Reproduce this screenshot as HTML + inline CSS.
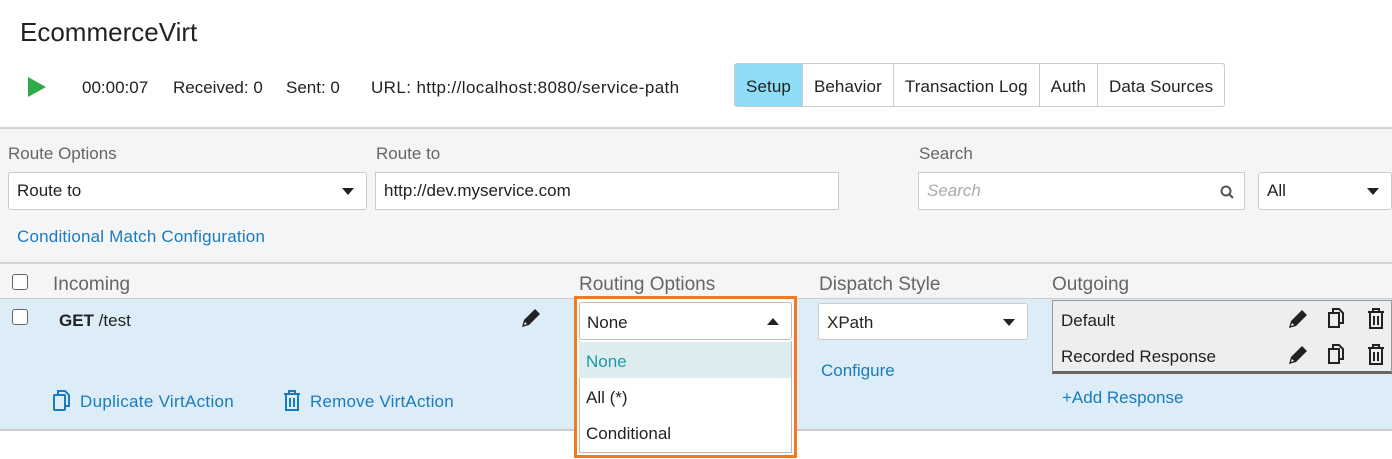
<!DOCTYPE html>
<html><head><style>
*{box-sizing:border-box;margin:0;padding:0}
body{width:1392px;height:459px;background:#fff;font-family:"Liberation Sans",sans-serif;color:#222;position:relative;overflow:hidden;font-size:17px}
.a{position:absolute;white-space:nowrap}
.lbl{color:#666;font-size:17px}
.inp{position:absolute;background:#fff;border:1px solid #ccc;height:38px;border-radius:3px;padding:0 8px;line-height:36px;font-size:17px}
.caret{position:absolute;right:12px;top:15px;width:0;height:0;border-left:6px solid transparent;border-right:6px solid transparent;border-top:7px solid #222}
.link{color:#1a7bbf}
.tab{float:left;height:42px;line-height:46px;padding:0 11px;border-right:1px solid #ccc;font-size:17px;letter-spacing:0.1px}
</style></head><body>
<div class="a" style="left:20px;top:17px;font-size:26px;color:#222">EcommerceVirt</div>
<svg class="a" style="left:27px;top:76px" width="20" height="22"><polygon points="1,1 19,11 1,21" fill="#2fac47"/></svg>
<div class="a" style="left:82px;top:78px">00:00:07</div>
<div class="a" style="left:173px;top:78px">Received: 0</div>
<div class="a" style="left:286px;top:78px">Sent: 0</div>
<div class="a" style="left:371px;top:78px;letter-spacing:0.4px">URL: http://localhost:8080/service-path</div>
<div class="a" style="left:734px;top:63px;height:44px;border:1px solid #ccc;border-radius:3px;background:#fff">
<div class="tab" style="background:#8fdcf6">Setup</div><div class="tab">Behavior</div><div class="tab">Transaction Log</div><div class="tab">Auth</div><div class="tab" style="border-right:none">Data Sources</div></div>
<div class="a" style="left:0;top:127px;width:1392px;height:136px;background:#f4f5f7;border-top:2px solid #d4d4d4"></div>
<div class="a lbl" style="left:8px;top:144px">Route Options</div>
<div class="a lbl" style="left:376px;top:144px">Route to</div>
<div class="a lbl" style="left:919px;top:144px">Search</div>
<div class="inp" style="left:8px;top:172px;width:359px">Route to<div class="caret"></div></div>
<div class="inp" style="left:375px;top:172px;width:464px;border-radius:0">http://dev.myservice.com</div>
<div class="inp" style="left:918px;top:172px;width:327px;border-radius:0;color:#aaa;font-style:italic">Search
<svg style="position:absolute;right:10px;top:12px" width="14" height="14"><circle cx="6" cy="6" r="4.5" stroke="#555" stroke-width="2" fill="none"/><line x1="9" y1="9" x2="13" y2="13" stroke="#555" stroke-width="2"/></svg></div>
<div class="inp" style="left:1258px;top:172px;width:134px">All<div class="caret"></div></div>
<div class="a link" style="left:17px;top:227px;letter-spacing:0.2px">Conditional Match Configuration</div>
<div class="a" style="left:0;top:262px;width:1392px;height:37px;background:#f4f5f7;border-top:2px solid #d4d4d4;border-bottom:1px solid #ccc"></div>
<div class="a" style="left:12px;top:274px;width:16px;height:16px;border:1.5px solid #666;border-radius:3px;background:#fff"></div>
<div class="a lbl" style="left:53px;top:274px;font-size:19px">Incoming</div>
<div class="a lbl" style="left:579px;top:274px;font-size:19px">Routing Options</div>
<div class="a lbl" style="left:819px;top:274px;font-size:19px">Dispatch Style</div>
<div class="a lbl" style="left:1052px;top:274px;font-size:19px">Outgoing</div>
<div class="a" style="left:0;top:299px;width:1392px;height:132px;background:#dcedf7;border-bottom:2px solid #ccc"></div>
<div class="a" style="left:12px;top:309px;width:16px;height:16px;border:1.5px solid #666;border-radius:3px;background:#fff"></div>
<div class="a" style="left:59px;top:311px"><b>GET</b> /test</div>
<svg class="a" style="left:520px;top:307px" width="22" height="22" viewBox="0 0 22 22"><path d="M2 20 L4 13 L15 2 L20 7 L9 18 Z" fill="#222"/><path d="M4 18 L5 15 L7 17 Z" fill="#fff"/></svg>
<svg class="a" style="left:52px;top:390px" width="20" height="22"><rect x="2" y="5" width="11" height="15" fill="none" stroke="#1a7bbf" stroke-width="2" rx="1"/><path d="M6 5 V1 H13 L17 5 V16 H13" fill="none" stroke="#1a7bbf" stroke-width="2"/></svg>
<div class="a link" style="left:80px;top:392px;letter-spacing:0.3px">Duplicate VirtAction</div>
<svg class="a" style="left:282px;top:390px" width="20" height="22"><path d="M2 4 H18 M7 4 V1 H13 V4 M4 4 V20 H16 V4 M8 8 V17 M12 8 V17" fill="none" stroke="#1a7bbf" stroke-width="2"/></svg>
<div class="a link" style="left:310px;top:392px;letter-spacing:0.2px">Remove VirtAction</div>
<div class="inp" style="left:818px;top:303px;width:210px;height:37px;line-height:37px">XPath<div class="caret"></div></div>
<div class="a link" style="left:821px;top:361px">Configure</div>
<div class="a" style="left:1052px;top:300px;width:340px;height:74px;background:#eee;border:1px solid #999;border-bottom:3px solid #666"></div>
<div class="a" style="left:1061px;top:311px">Default</div>
<div class="a" style="left:1061px;top:347px">Recorded Response</div>
<svg class="a" style="left:1287px;top:308px" width="22" height="22" viewBox="0 0 22 22"><path d="M2 20 L4 13 L15 2 L20 7 L9 18 Z" fill="#222"/><path d="M4 18 L5 15 L7 17 Z" fill="#fff"/></svg>
<svg class="a" style="left:1287px;top:344px" width="22" height="22" viewBox="0 0 22 22"><path d="M2 20 L4 13 L15 2 L20 7 L9 18 Z" fill="#222"/><path d="M4 18 L5 15 L7 17 Z" fill="#fff"/></svg>
<svg class="a" style="left:1327px;top:308px" width="20" height="22"><rect x="2" y="5" width="10" height="14" fill="none" stroke="#222" stroke-width="2"/><path d="M6 5 V1 H12 L16 5 V15 H12" fill="none" stroke="#222" stroke-width="2"/></svg>
<svg class="a" style="left:1327px;top:344px" width="20" height="22"><rect x="2" y="5" width="10" height="14" fill="none" stroke="#222" stroke-width="2"/><path d="M6 5 V1 H12 L16 5 V15 H12" fill="none" stroke="#222" stroke-width="2"/></svg>
<svg class="a" style="left:1367px;top:308px" width="20" height="22"><path d="M1 4 H17 M6 4 V1 H12 V4 M3 4 V20 H15 V4 M7 8 V17 M11 8 V17" fill="none" stroke="#222" stroke-width="2"/></svg>
<svg class="a" style="left:1367px;top:344px" width="20" height="22"><path d="M1 4 H17 M6 4 V1 H12 V4 M3 4 V20 H15 V4 M7 8 V17 M11 8 V17" fill="none" stroke="#222" stroke-width="2"/></svg>
<div class="a link" style="left:1062px;top:388px">+Add Response</div>
<div class="a" style="left:574px;top:296px;width:223px;height:162px;border:3px solid #f57a1f;background:#fff"></div>
<div class="inp" style="left:579px;top:302px;width:213px;height:38px;border-color:#bbb;padding-left:7px;line-height:40px">None<div class="caret" style="border-top:none;border-bottom:7px solid #222;top:15px"></div></div>
<div class="a" style="left:579px;top:341px;width:213px;height:112px;border:1px solid #bbb;border-top:none;background:#fff"></div>
<div class="a" style="left:579px;top:342px;width:212px;height:36px;background:#dcecef"></div>
<div class="a" style="left:586px;top:352px;color:#1e9aa8">None</div>
<div class="a" style="left:586px;top:388px">All (*)</div>
<div class="a" style="left:586px;top:424px">Conditional</div>
</body></html>
